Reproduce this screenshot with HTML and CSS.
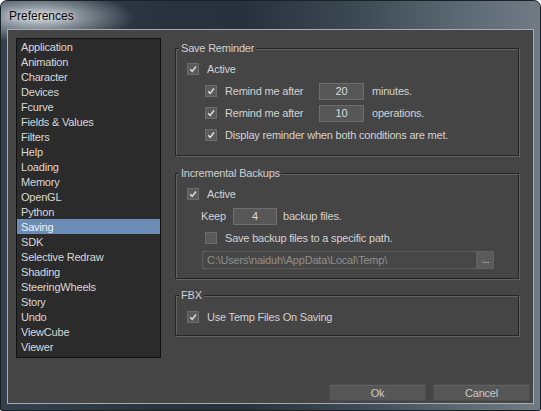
FILE: index.html
```html
<!DOCTYPE html>
<html>
<head>
<meta charset="utf-8">
<link rel="stylesheet" href="styles.css">
</head>
<body>
<div class="window">
  <div class="titlebar"><span class="title">Preferences</span></div>
  <div class="frame">
    <div class="content">
      <div class="main">
        <ul class="list">
          <li>Application</li>
          <li>Animation</li>
          <li>Character</li>
          <li>Devices</li>
          <li>Fcurve</li>
          <li>Fields &amp; Values</li>
          <li>Filters</li>
          <li>Help</li>
          <li>Loading</li>
          <li>Memory</li>
          <li>OpenGL</li>
          <li>Python</li>
          <li class="sel">Saving</li>
          <li>SDK</li>
          <li>Selective Redraw</li>
          <li>Shading</li>
          <li>SteeringWheels</li>
          <li>Story</li>
          <li>Undo</li>
          <li>ViewCube</li>
          <li>Viewer</li>
        </ul>
        <div class="panel">
          <div class="group g1">
            <span class="legend">Save Reminder</span>
            <div class="row lvl1"><span class="cb on"><svg viewBox="0 0 12 12"><path d="M2.6 6.2 L5 8.8 L9.6 3"/></svg></span><span class="txt">Active</span></div>
            <div class="row lvl2"><span class="cb on"><svg viewBox="0 0 12 12"><path d="M2.6 6.2 L5 8.8 L9.6 3"/></svg></span><span class="txt lblw">Remind me after</span><span class="field num">20</span><span class="txt after">minutes.</span></div>
            <div class="row lvl2"><span class="cb on"><svg viewBox="0 0 12 12"><path d="M2.6 6.2 L5 8.8 L9.6 3"/></svg></span><span class="txt lblw">Remind me after</span><span class="field num">10</span><span class="txt after">operations.</span></div>
            <div class="row lvl2"><span class="cb on"><svg viewBox="0 0 12 12"><path d="M2.6 6.2 L5 8.8 L9.6 3"/></svg></span><span class="txt">Display reminder when both conditions are met.</span></div>
          </div>
          <div class="group g2">
            <span class="legend">Incremental Backups</span>
            <div class="row lvl1"><span class="cb on"><svg viewBox="0 0 12 12"><path d="M2.6 6.2 L5 8.8 L9.6 3"/></svg></span><span class="txt">Active</span></div>
            <div class="row keep"><span class="txt keepw">Keep</span><span class="field num small">4</span><span class="txt after2">backup files.</span></div>
            <div class="row lvl2"><span class="cb"></span><span class="txt">Save backup files to a specific path.</span></div>
            <div class="row pathrow"><span class="path">C:\Users\naiduh\AppData\Local\Temp\</span><span class="browse">...</span></div>
          </div>
          <div class="group g3">
            <span class="legend">FBX</span>
            <div class="row lvl1"><span class="cb on"><svg viewBox="0 0 12 12"><path d="M2.6 6.2 L5 8.8 L9.6 3"/></svg></span><span class="txt">Use Temp Files On Saving</span></div>
          </div>
        </div>
      </div>
      <div class="buttons">
        <span class="btn">Ok</span>
        <span class="btn">Cancel</span>
      </div>
    </div>
  </div>
</div>
</body>
</html>
```

FILE: styles.css
```css
html, body {
  margin: 0;
  padding: 0;
  background: #ffffff;
}

.window {
  width: 541px;
  height: 411px;
  box-sizing: border-box;
  border: 1px solid #1a2229;
  border-radius: 7px 7px 2px 2px;
  overflow: hidden;
  display: flex;
  flex-direction: column;
  background:
    radial-gradient(ellipse 95px 26px at 38px 16px, rgba(215,222,228,0.95) 0%, rgba(190,198,206,0.6) 45%, rgba(60,72,84,0) 100%),
    linear-gradient(to right, #34414c 0%, #29333d 30%, #28323c 45%, #3b4752 65%, #5c6872 85%, #707b84 100%);
  font-family: "Liberation Sans", Arial, sans-serif;
}

.titlebar {
  height: 28px;
  display: flex;
  align-items: center;
  padding-left: 8px;
  flex: none;
}

.title {
  font-family: "Liberation Sans", Arial, sans-serif;
  font-size: 12px;
  color: #0c0c0c;
  margin-top: 1px;
  text-shadow: 0 0 6px rgba(255,255,255,0.9);
}

.frame {
  flex: 1;
  padding: 0 6px 6px 6px;
  display: flex;
}

.content {
  flex: 1;
  border: 1px solid #a3aeb8;
  background: #454545;
  display: flex;
  flex-direction: column;
  color: #d2d2d2;
  font-size: 11px;
  letter-spacing: -0.2px;
}

.main {
  display: flex;
  flex: 1;
}

.list {
  list-style: none;
  margin: 8px 0 0 8px;
  padding: 0;
  width: 145px;
  height: 320px;
  box-sizing: border-box;
  border: 1px solid #111111;
  background: #2b2b2b;
  color: #d8d8d8;
}

.list li {
  height: 14px;
  padding-top: 1px;
  line-height: 15px;
  padding-left: 4px;
  white-space: nowrap;
}

.list li.sel {
  background: #6b8db5;
  color: #eef2f6;
}

.panel {
  margin-left: 14px;
  width: 344px;
  padding-top: 18px;
  display: flex;
  flex-direction: column;
}

.group {
  position: relative;
  border: 1px solid #262626;
  box-shadow: inset 1px 1px 0 #626262, 1px 1px 0 #626262;
}

.g1 { padding: 9px 0 9px 0; }
.g2 { margin-top: 17px; padding: 9px 0 7px 0; }
.g3 { margin-top: 16px; padding: 10px 0 7px 0; }

.legend {
  position: absolute;
  left: 3px;
  top: -8px;
  padding: 0 2px;
  line-height: 14px;
  background: #454545;
  color: #d0d0d0;
}

.row {
  height: 22px;
  display: flex;
  align-items: center;
  white-space: nowrap;
}

.lvl1 { padding-left: 11px; }
.lvl2 { padding-left: 29px; }
.keep { padding-left: 25px; }
.pathrow { padding-left: 26px; }

.cb {
  width: 12px;
  height: 12px;
  box-sizing: border-box;
  border: 1px solid #6c6c6c;
  background: #5a5a5a;
  margin-right: 8px;
  flex: none;
  display: flex;
}

.cb svg {
  width: 10px;
  height: 10px;
  fill: none;
  stroke: #e2e2e2;
  stroke-width: 1.7;
}

.txt { color: #d2d2d2; }

.lblw { width: 94px; }
.keepw { width: 32px; }

.field {
  height: 17px;
  box-sizing: border-box;
  border: 1px solid #6e6e6e;
  background: #575757;
  color: #dadada;
  display: flex;
  align-items: center;
  justify-content: center;
  width: 45px;
  flex: none;
}

.field.small { width: 44px; }

.after { margin-left: 8px; }
.after2 { margin-left: 6px; }

.path {
  width: 275px;
  height: 18px;
  box-sizing: border-box;
  border: 1px solid #5e5e5e;
  background: #474747;
  color: #8e8e8e;
  display: flex;
  align-items: center;
  padding-left: 4px;
}

.browse {
  width: 17px;
  height: 18px;
  box-sizing: border-box;
  background: #5a5a5a;
  border: 1px solid #626262;
  color: #cfcfcf;
  display: flex;
  align-items: center;
  justify-content: center;
  font-size: 10px;
  line-height: 10px;
}

.buttons {
  display: flex;
  justify-content: flex-end;
  gap: 7px;
  padding: 0 3px 2px 0;
}

.btn {
  width: 97px;
  height: 17px;
  box-sizing: border-box;
  background: #575757;
  border: 1px solid #4d4d4d;
  box-shadow: inset 0 1px 0 #5f5f5f;
  color: #cacaca;
  display: flex;
  align-items: center;
  justify-content: center;
}
```
